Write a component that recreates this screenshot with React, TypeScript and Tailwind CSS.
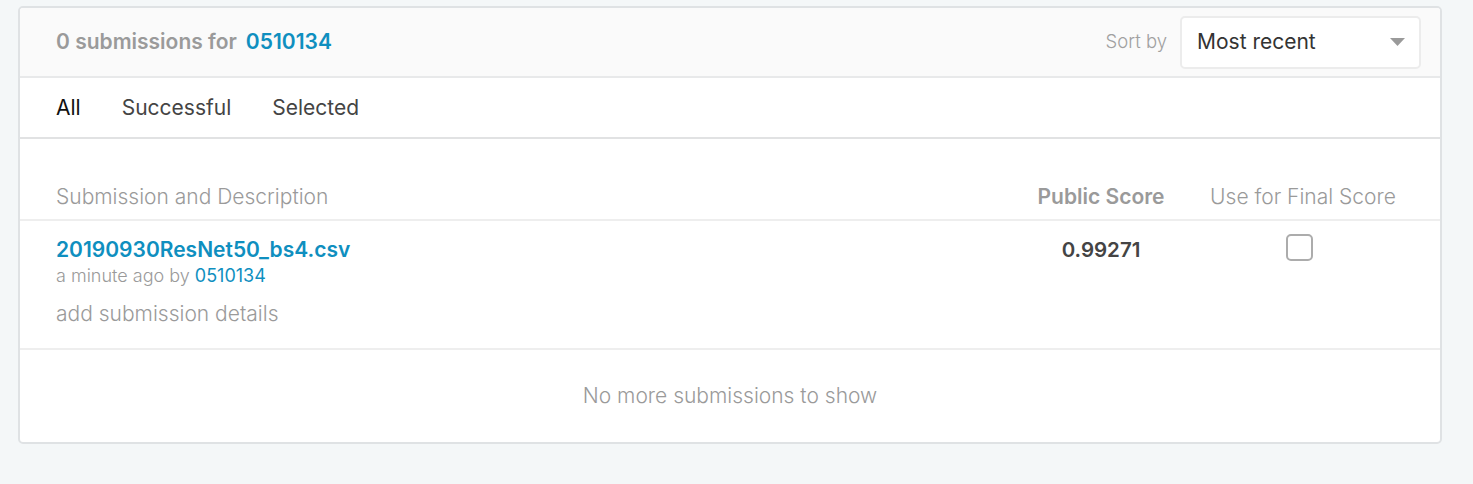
const font = { fontFamily: 'Inter, "Noto Sans", sans-serif' }

function Checkbox() {
  return <span className="block h-[27px] w-[27px] rounded-[5px] border-2 border-[#acacac] bg-white" />
}

export default function App() {
  return (
    <div className="min-h-[484px] bg-[#f4f7f8] pl-[18px] pr-[31px] pt-[6px]" style={font}>
      <div className="overflow-hidden rounded-[5px] border-2 border-[#dfe2e4] bg-white">
        <header className="flex h-[70px] items-center justify-between border-b-2 border-[#e8e9ea] bg-[#fafafa] pl-[36px] pr-[19px]">
          <div className="flex gap-[9px] text-[21px] font-semibold">
            <span className="text-[#9a9a9a]">0 submissions for</span>
            <span className="text-[#0f8fbf]">0510134</span>
          </div>
          <div className="flex items-center gap-[13px]">
            <span className="text-[18.5px] font-light text-[#a0a0a0]">Sort by</span>
            <div className="flex h-[53px] w-[241px] items-center justify-between rounded-[5px] border-2 border-[#ececec] bg-white pl-[15px] pr-[14px]">
              <span className="text-[21px] text-[#333]">Most recent</span>
              <svg width="15" height="8" viewBox="0 0 15 8">
                <path d="M0 0h15L7.5 8z" fill="#9a9a9a" />
              </svg>
            </div>
          </div>
        </header>

        <nav className="flex h-[61px] items-center gap-[41px] border-b-2 border-[#e1e2e3] pl-[36px] text-[21px]">
          <span className="text-[#111]">All</span>
          <span className="text-[#444]">Successful</span>
          <span className="text-[#444]">Selected</span>
        </nav>

        <div className="flex h-[82px] items-end border-b-2 border-[#eeeeee] pb-[7px] pl-[36px] pr-[42px] text-[21px] font-light text-[#9a9a9a]">
          <span className="flex-1">Submission and Description</span>
          <span className="w-[130px] text-center font-semibold text-[#9a9a9a]">Public Score</span>
          <span className="ml-[42px] w-[190px] text-center">Use for Final Score</span>
        </div>

        <div className="flex h-[129px] border-b-2 border-[#eeeeee] pl-[36px] pr-[42px] pt-[13px]">
          <div className="flex flex-1 flex-col pt-[2px]">
            <span className="text-[21px] font-semibold leading-[28px] text-[#0f8fbf]">20190930ResNet50_bs4.csv</span>
            <span className="text-[18px] font-light leading-[24px] text-[#9a9a9a]">
              a minute ago by <span className="font-normal text-[#0f8fbf]">0510134</span>
            </span>
            <span className="mt-[10px] text-[21px] font-light text-[#9a9a9a]">add submission details</span>
          </div>
          <span className="w-[130px] pt-[1px] text-center text-[20.5px] font-semibold text-[#444]">0.99271</span>
          <div className="ml-[42px] flex w-[190px] justify-center pr-[8px]">
            <Checkbox />
          </div>
        </div>

        <div className="flex h-[92px] items-center justify-center text-[21px] font-light text-[#9a9a9a]">
          No more submissions to show
        </div>
      </div>
    </div>
  )
}
